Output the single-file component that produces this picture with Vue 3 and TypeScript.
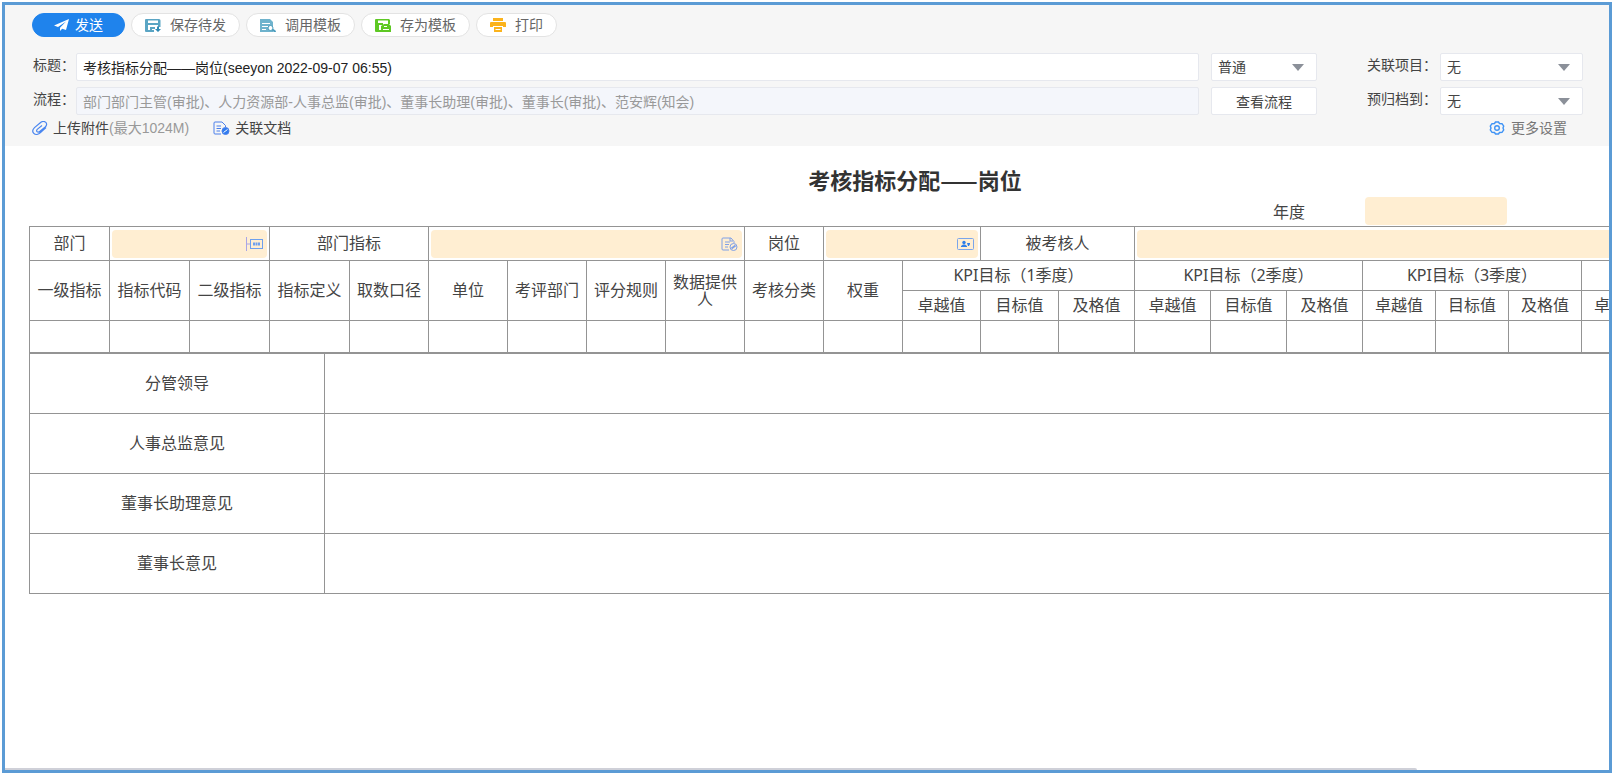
<script setup lang="ts">
import { ref } from 'vue'

interface Quarter {
  id: number
  label: string
}

const title = ref('考核指标分配——岗位(seeyon 2022-09-07 06:55)')
const flow = ref(
  '部门部门主管(审批)、人力资源部-人事总监(审批)、董事长助理(审批)、董事长(审批)、范安辉(知会)'
)
const priority = ref('普通')
const project = ref('无')
const archive = ref('无')
const year = ref('')
const department = ref('')
const departmentIndex = ref('')
const post = ref('')
const assessee = ref('')

const headers: string[] = [
  '一级指标', '指标代码', '二级指标', '指标定义', '取数口径', '单位',
  '考评部门', '评分规则', '数据提供人', '考核分类', '权重'
]
const quarters: Quarter[] = [1, 2, 3, 4].map((n) => ({ id: n, label: `KPI目标（${n}季度）` }))
const levels: string[] = ['卓越值', '目标值', '及格值']
const opinions: string[] = ['分管领导', '人事总监意见', '董事长助理意见', '董事长意见']
const columnCount = headers.length + quarters.length * levels.length
</script>

<template>
  <div class="page">
    <main class="frame">
      <header class="head">
        <nav class="toolbar" aria-label="操作">
          <button type="button" class="btn primary">
            <svg width="15" height="12" viewBox="0 0 15 12" aria-hidden="true">
              <path d="M15 0 0 6.500l4 1.600L12 2.500 6 8.700V12l2.200-2.200L12 11z" fill="#fff" />
            </svg>
            <span>发送</span>
          </button>
          <button type="button" class="btn">
            <svg width="16" height="13" viewBox="0 0 16 13" aria-hidden="true">
              <path
                fill="#5aa5c4"
                fill-rule="evenodd"
                d="M1 0h13a1.500 1.500 0 0 1 1.500 1.500V8H13V6H3v5h6v2H1a1 1 0 0 1-1-1V1a1 1 0 0 1 1-1zM3 1.500V4h10V1.500z"
              />
              <path fill="#5aa5c4" d="M5 8h5v2H7v3H5z" />
              <path fill="#2f8ab5" d="M12 7.500h2V10h2l-3 3-3-3h2z" />
            </svg>
            <span>保存待发</span>
          </button>
          <button type="button" class="btn">
            <svg width="16" height="13" viewBox="0 0 16 13" aria-hidden="true">
              <path fill="#6fb3cd" d="M0 0h10l3 3v10H0z" />
              <path fill="none" stroke="#fff" d="M2 4.500h8M2 7.500h6M2 10.500h4" />
              <circle cx="10.500" cy="9" r="2.500" fill="#fff" stroke="#4c9dbd" />
              <path d="m12.500 10.500 3 2.500" stroke="#4c9dbd" stroke-width="2" />
            </svg>
            <span>调用模板</span>
          </button>
          <button type="button" class="btn">
            <svg width="16" height="13" viewBox="0 0 16 13" aria-hidden="true">
              <path
                fill="#5ec824"
                fill-rule="evenodd"
                d="M1 0h13l1 1v4h-2V1.500H3V4h5v2H4v5h2v2H1a1 1 0 0 1-1-1V1a1 1 0 0 1 1-1z"
              />
              <path fill="#5ec824" d="M6 7l3-2h5l2 2v6H6z" />
              <path fill="none" stroke="#fff" d="M9 7.500h3M8 10.500h6" />
            </svg>
            <span>存为模板</span>
          </button>
          <button type="button" class="btn">
            <svg width="16" height="14" viewBox="0 0 16 14" aria-hidden="true">
              <path fill="#fbb31c" d="M3 0h10v3H3zM1 4h14a1 1 0 0 1 1 1v4h-3V8H3v1H0V5a1 1 0 0 1 1-1z" />
              <path fill="#fbb31c" d="M4 9h8v5H4z" />
              <path stroke="#fff" d="M5.500 11.500h5" />
            </svg>
            <span>打印</span>
          </button>
        </nav>

        <div class="form">
          <label for="title">标题：</label>
          <input id="title" v-model="title" class="box" type="text" />
          <div class="select first">
            <select v-model="priority" class="box" aria-label="重要程度">
              <option>普通</option>
            </select>
            <svg width="12" height="7" viewBox="0 0 12 7" aria-hidden="true"><path d="M0 0h12L6 7z" /></svg>
          </div>
          <label class="second" for="project">关联项目：</label>
          <div class="select">
            <select id="project" v-model="project" class="box">
              <option>无</option>
            </select>
            <svg width="12" height="7" viewBox="0 0 12 7" aria-hidden="true"><path d="M0 0h12L6 7z" /></svg>
          </div>

          <label for="flow">流程：</label>
          <input id="flow" v-model="flow" class="box muted" type="text" readonly />
          <button type="button" class="box view first">查看流程</button>
          <label class="second" for="archive">预归档到：</label>
          <div class="select">
            <select id="archive" v-model="archive" class="box">
              <option>无</option>
            </select>
            <svg width="12" height="7" viewBox="0 0 12 7" aria-hidden="true"><path d="M0 0h12L6 7z" /></svg>
          </div>
        </div>

        <div class="links">
          <a href="#attach">
            <svg width="16" height="14" viewBox="0 0 16 14" fill="none" stroke="#4a86f0" stroke-width="1.200" aria-hidden="true">
              <path
                d="M14 6.500 8.500 11.500C6.500 13.500 3.500 14 1.800 12.300.200 10.700.800 8.300 2.500 6.600L8 2c2-1.700 4.500-1.800 5.800-.6 1.300 1.200 1 3.100-.600 4.600L8 10.300c-1 .9-2.300 1-3 .3-.7-.7-.4-1.700.5-2.500L10 4.500"
              />
            </svg>
            <span>上传附件<small>(最大1024M)</small></span>
          </a>
          <a href="#docs">
            <svg width="17" height="14" viewBox="0 0 17 14" fill="none" stroke="#4a7fea" aria-hidden="true">
              <path d="M8 13H2a1 1 0 0 1-1-1V2a1 1 0 0 1 1-1h7l3.500 3.500V6M3.500 5H8M3.500 7.500H8M3.500 10H7" />
              <circle cx="12.500" cy="10" r="3.500" fill="#2f7cf0" />
              <path d="m10.500 11.500 4-3" stroke="#fff" />
            </svg>
            <span>关联文档</span>
          </a>
          <a href="#more" class="more">
            <svg width="16" height="14" viewBox="0 0 16 14" fill="none" stroke="#3f93f5" stroke-width="1.400" aria-hidden="true">
              <path
                d="M6.500 1h3l1 1.500 2.500.2 1.700 2.300-.7 2 .7 2-1.700 2.300-2.500.2-1 1.500h-3l-1-1.500-2.500-.2L1.300 9 2 7l-.7-2L3 2.700l2.500-.2z"
              />
              <circle cx="8" cy="7" r="2.300" />
            </svg>
            <span>更多设置</span>
          </a>
        </div>
      </header>

      <section class="sheet">
        <h1>考核指标分配——岗位</h1>
        <div class="year">
          <label for="year">年度</label>
          <input id="year" v-model="year" type="text" />
        </div>

        <table class="grid">
          <colgroup>
            <col v-for="n in 4" :key="'a' + n" class="c80" />
            <col v-for="n in 7" :key="'b' + n" class="c79" />
            <col v-for="n in 2" :key="'c' + n" class="c78" />
            <col v-for="n in 4" :key="'d' + n" class="c76" />
            <col v-for="n in 6" :key="'e' + n" class="c73" />
          </colgroup>
          <tbody>
            <tr class="row-top">
              <th scope="row"><label for="department">部门</label></th>
              <td colspan="2">
                <div class="field">
                  <input id="department" v-model="department" type="text" />
                  <svg width="17" height="14" viewBox="0 0 17 14" fill="none" stroke="#6ea0ee" aria-hidden="true">
                    <path d="M.500 0v14M1 7h3" stroke="#a9a5e6" />
                    <rect x="4.500" y="2.500" width="12" height="9" />
                    <path d="M7 7h7" stroke-width="3" stroke-dasharray="2 .5" />
                  </svg>
                </div>
              </td>
              <th scope="row" colspan="2"><label for="department-index">部门指标</label></th>
              <td colspan="4">
                <div class="field">
                  <input id="department-index" v-model="departmentIndex" type="text" />
                  <svg width="17" height="14" viewBox="0 0 17 14" fill="none" stroke="#7fa0e6" aria-hidden="true">
                    <path d="M8 13H2a1 1 0 0 1-1-1V2a1 1 0 0 1 1-1h8l3 3.500V6M4 5h5M4 7.500h4M4 10h3M9 1v3h3" />
                    <circle cx="12.500" cy="10" r="3.500" />
                    <path d="m10.500 11.500 4-3" stroke-width="2" />
                  </svg>
                </div>
              </td>
              <th scope="row"><label for="post">岗位</label></th>
              <td colspan="2">
                <div class="field">
                  <input id="post" v-model="post" type="text" />
                  <svg width="17" height="12" viewBox="0 0 17 12" aria-hidden="true">
                    <rect x=".5" y=".5" width="16" height="11" rx="1" fill="none" stroke="#7aa5ea" />
                    <circle cx="7" cy="4.500" r="1.700" fill="#2f7fe8" />
                    <path d="M4 9V8l2-1.500h2L10 8v1zM10 5h3v1l-1 2h-1z" fill="#2f7fe8" />
                  </svg>
                </div>
              </td>
              <th scope="row" colspan="2"><label for="assessee">被考核人</label></th>
              <td colspan="9">
                <div class="field">
                  <input id="assessee" v-model="assessee" type="text" />
                </div>
              </td>
            </tr>
            <tr class="row-sub">
              <th v-for="h in headers" :key="h" scope="col" rowspan="2">{{ h }}</th>
              <th v-for="q in quarters" :key="q.id" scope="colgroup" :colspan="levels.length">{{ q.label }}</th>
            </tr>
            <tr class="row-sub">
              <template v-for="q in quarters" :key="q.id">
                <th v-for="l in levels" :key="l" scope="col">{{ l }}</th>
              </template>
            </tr>
            <tr class="row-data">
              <td v-for="n in columnCount" :key="n"></td>
            </tr>
          </tbody>
        </table>

        <table class="grid opinions">
          <colgroup>
            <col class="c295" />
            <col />
          </colgroup>
          <tbody>
            <tr v-for="o in opinions" :key="o">
              <th scope="row">{{ o }}</th>
              <td></td>
            </tr>
          </tbody>
        </table>
      </section>

      <div class="scroll"></div>
    </main>
  </div>
</template>

<style>
body {
  margin: 0;
  background: #fff;
}
</style>

<style scoped>
.page {
  box-sizing: border-box;
  min-height: 100vh;
  padding: 2px;
  display: flex;
  font-family: 'Liberation Sans', 'Noto Sans CJK SC', sans-serif;
  font-size: 14px;
  color: #444;
}
.page * {
  box-sizing: border-box;
}
.frame {
  flex: 1;
  min-width: 0;
  display: flex;
  flex-direction: column;
  overflow: hidden;
  border: 3px solid #5b9bd5;
  background: #fff;
}
.head {
  padding: 8px 26px 8px 27px;
  background: #f6f6f6;
}
button,
input,
select {
  font: inherit;
  color: inherit;
}
.toolbar {
  display: flex;
  gap: 6px;
  margin-bottom: 16px;
}
.btn {
  display: flex;
  align-items: center;
  gap: 9px;
  height: 24px;
  padding: 0 13px;
  border: 1px solid #e3e3e3;
  border-radius: 12px;
  background: #fff;
  color: #666;
  line-height: 20px;
  white-space: nowrap;
}
.btn.primary {
  gap: 6px;
  padding: 0 21px;
  border-color: #1f83ec;
  background: #1f83ec;
  color: #fff;
}
.form {
  display: grid;
  grid-template-columns: 44px minmax(0, 1fr) auto auto 143px;
  row-gap: 6px;
}
.form label {
  padding-left: 1px;
  line-height: 24px;
  white-space: nowrap;
}
.box {
  width: 100%;
  height: 28px;
  padding: 0 6px;
  border: 1px solid #e6e8ee;
  border-radius: 2px;
  background: #fff;
  color: #222;
}
.box.muted {
  background: #f4f6fb;
  color: #999;
}
.first {
  width: 106px;
  margin-left: 12px;
}
.form .second {
  width: 123px;
  padding-left: 50px;
}
.select {
  position: relative;
}
select.box {
  appearance: none;
  color: #444;
}
.select svg {
  position: absolute;
  top: 11px;
  right: 13px;
  fill: #8b9099;
  pointer-events: none;
}
.box.view {
  width: 106px;
  color: #444;
}
.links {
  display: flex;
  align-items: center;
  gap: 24px;
  height: 20px;
  margin-top: 3px;
  line-height: 20px;
}
.links a {
  display: flex;
  align-items: center;
  gap: 5px;
  color: #444;
  text-decoration: none;
  white-space: nowrap;
}
.links small {
  font-size: 14px;
  color: #999;
}
.links .more {
  margin-left: auto;
  margin-right: 16px;
  gap: 6px;
  color: #777;
}
.sheet {
  width: 1772px;
  margin-left: 24px;
  flex: 1;
  font-family: 'Noto Sans', 'Noto Sans CJK SC', sans-serif;
  font-size: 16px;
}
h1 {
  margin: 19px 0 3px;
  font-family: 'Noto Sans CJK SC', sans-serif;
  font-size: 22px;
  line-height: 28px;
  font-weight: 700;
  text-align: center;
  color: #333;
}
.year {
  display: flex;
  justify-content: flex-end;
  align-items: center;
  gap: 60px;
  height: 30px;
  padding-right: 294px;
}
.year input {
  width: 142px;
  height: 28px;
  border: 0;
  border-radius: 4px;
  background: #ffeed2;
}
.grid {
  width: 100%;
  table-layout: fixed;
  border-collapse: collapse;
}
.grid th,
.grid td {
  padding: 0;
  border: 1px solid #949494;
  font-weight: 400;
  line-height: 17px;
  text-align: center;
}
.grid td {
  padding: 2px;
}
.c80 {
  width: 80px;
}
.c79 {
  width: 79px;
}
.c78 {
  width: 78px;
}
.c76 {
  width: 76px;
}
.c73 {
  width: 73px;
}
.c295 {
  width: 295px;
}
.row-top {
  height: 34px;
}
.row-sub {
  height: 30px;
}
.row-data {
  height: 32px;
}
.opinions tr {
  height: 60px;
}
.field {
  display: flex;
  align-items: center;
  height: 28px;
  padding-right: 4px;
  border-radius: 4px;
  background: #ffeed2;
}
.field input {
  flex: 1;
  min-width: 0;
  height: 100%;
  border: 0;
  background: transparent;
}
.field svg {
  flex: none;
}
.scroll {
  width: 88%;
  height: 2px;
  border-radius: 0 2px 0 0;
  background: #cfd0d8;
}
</style>
